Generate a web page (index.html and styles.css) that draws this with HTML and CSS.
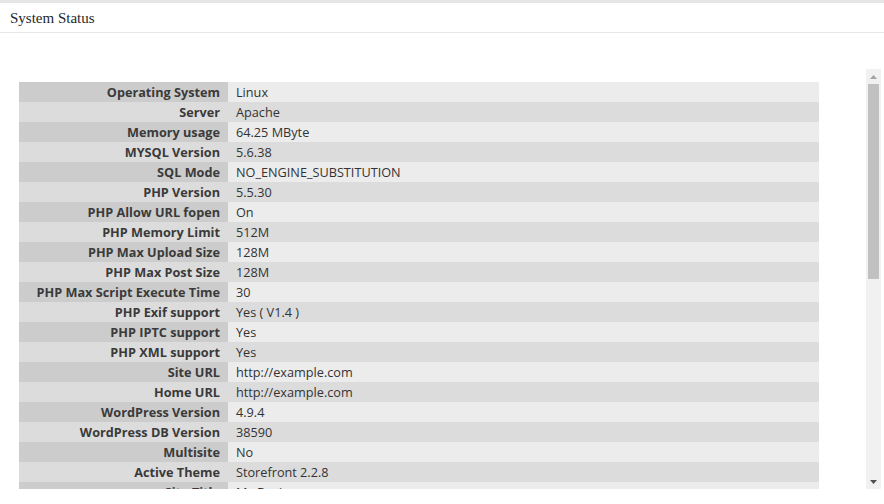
FILE: index.html
```html
<!DOCTYPE html>
<html>
<head>
<meta charset="utf-8">
<link rel="stylesheet" href="styles.css">
</head>
<body>
<div class="topbar"></div>
<header class="head"><h1 class="title">System Status</h1></header>
<div class="frame">
  <div class="viewport">
    <div class="inner">
      <table class="status">
        <tr><th>Operating System</th><td>Linux</td></tr>
        <tr><th>Server</th><td>Apache</td></tr>
        <tr><th>Memory usage</th><td>64.25 MByte</td></tr>
        <tr><th>MYSQL Version</th><td>5.6.38</td></tr>
        <tr><th>SQL Mode</th><td>NO_ENGINE_SUBSTITUTION</td></tr>
        <tr><th>PHP Version</th><td>5.5.30</td></tr>
        <tr><th>PHP Allow URL fopen</th><td>On</td></tr>
        <tr><th>PHP Memory Limit</th><td>512M</td></tr>
        <tr><th>PHP Max Upload Size</th><td>128M</td></tr>
        <tr><th>PHP Max Post Size</th><td>128M</td></tr>
        <tr><th>PHP Max Script Execute Time</th><td>30</td></tr>
        <tr><th>PHP Exif support</th><td>Yes ( V1.4 )</td></tr>
        <tr><th>PHP IPTC support</th><td>Yes</td></tr>
        <tr><th>PHP XML support</th><td>Yes</td></tr>
        <tr><th>Site URL</th><td>http://example.com</td></tr>
        <tr><th>Home URL</th><td>http://example.com</td></tr>
        <tr><th>WordPress Version</th><td>4.9.4</td></tr>
        <tr><th>WordPress DB Version</th><td>38590</td></tr>
        <tr><th>Multisite</th><td>No</td></tr>
        <tr><th>Active Theme</th><td>Storefront 2.2.8</td></tr>
        <tr><th>Site Title</th><td>My Business</td></tr>
      </table>
    </div>
  </div>
  <div class="scrollbar" aria-hidden="true">
    <div class="sb-btn">
      <svg width="7" height="4" viewBox="0 0 7 4"><polygon points="3.5,0 7,4 0,4" fill="#a3a3a3"/></svg>
    </div>
    <div class="sb-track"><div class="sb-thumb"></div></div>
    <div class="sb-btn">
      <svg width="7" height="4" viewBox="0 0 7 4"><polygon points="0,0 7,0 3.5,4" fill="#505050"/></svg>
    </div>
  </div>
</div>
</body>
</html>
```
FILE: styles.css
```css
html, body {
  margin: 0;
  padding: 0;
  background: #fff;
}
.topbar {
  height: 3px;
  background: #e6e6e6;
}
.head {
  height: 29px;
  border-bottom: 1px solid #e8e8e8;
  display: flex;
  align-items: center;
}
.title {
  margin: 0 0 0 10px;
  font-family: "Liberation Serif", serif;
  font-weight: normal;
  font-size: 15px;
  color: #23282d;
  line-height: 1;
  position: relative;
  top: 1px;
}
.frame {
  margin-top: 36px;
  width: 881px;
  height: 420px;
  display: flex;
}
.viewport {
  flex: 1;
  overflow: hidden;
}
.scrollbar {
  width: 15px;
  display: flex;
  flex-direction: column;
  background: #f1f1f1;
}
.sb-btn {
  height: 15px;
  display: flex;
  align-items: center;
  justify-content: center;
}
.sb-track {
  flex: 1;
  padding: 0 2px;
}
.sb-thumb {
  height: 195px;
  background: #c1c1c1;
}
.inner {
  padding: 13px 0 27px 19px;
}
.status {
  border-collapse: collapse;
  width: 800px;
  font-family: "Open Sans", "Noto Sans", sans-serif;
  font-size: 12.7px;
  color: #333;
}
.status th,
.status td {
  height: 20px;
  padding: 1px 8px 0;
  line-height: 19px;
  white-space: nowrap;
  box-sizing: border-box;
}
.status th {
  width: 209px;
  text-align: right;
  font-weight: bold;
  color: #3a3a3a;
}
.status tr:nth-child(odd) th { background: #cccccc; }
.status tr:nth-child(odd) td { background: #ececec; }
.status tr:nth-child(even) th,
.status tr:nth-child(even) td { background: #dcdcdc; }
```
